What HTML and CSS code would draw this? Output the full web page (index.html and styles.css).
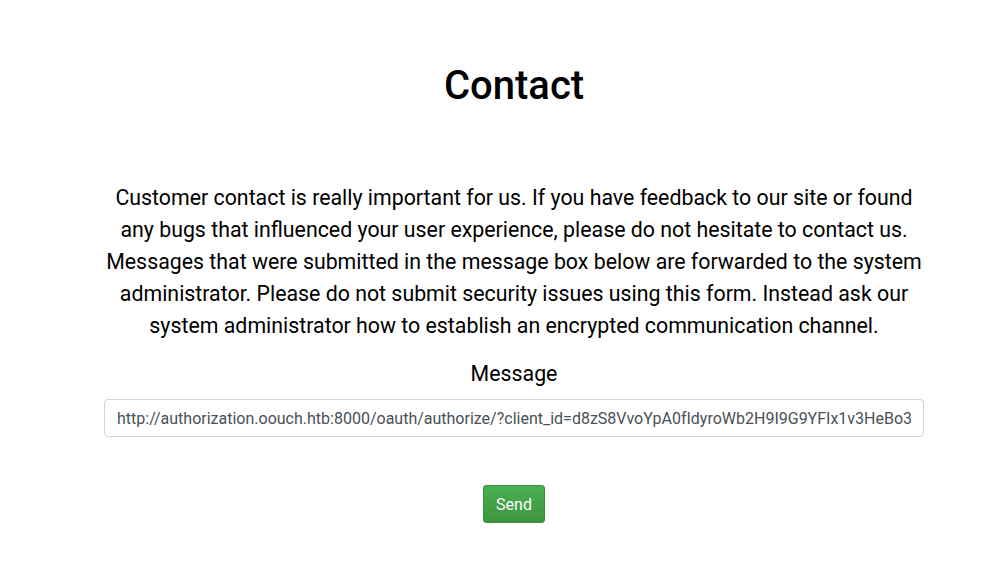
FILE: index.html
```html
<!DOCTYPE html>
<html>
<head>
<meta charset="utf-8">
<link rel="stylesheet" href="styles.css">
</head>
<body>
<main class="page">
  <h1 class="title">Contact</h1>
  <p class="intro">Customer contact is really important for us. If you have feedback to our site or found any bugs that influenced your user experience, please do not hesitate to contact us. Messages that were submitted in the message box below are forwarded to the system administrator. Please do not submit security issues using this form. Instead ask our system administrator how to establish an encrypted communication channel.</p>
  <form class="form">
    <label class="label" for="msg">Message</label>
    <input class="field" id="msg" type="text" value="http://authorization.oouch.htb:8000/oauth/authorize/?client_id=d8zS8VvoYpA0fIdyroWb2H9I9G9YFIx1v3HeBo3Gz&amp;response_type=code&amp;redirect_uri=http://consumer.oouch.htb:5000/oauth/connect/token&amp;scope=read">
    <button class="send" type="button">Send</button>
  </form>
</main>
</body>
</html>
```
FILE: styles.css
```css
html, body {
  margin: 0;
  padding: 0;
  background: #fff;
}
body {
  font-family: Roboto, "Liberation Sans", sans-serif;
  color: #000;
}
.page {
  width: 820px;
  margin-left: 104px;
  padding-top: 62px;
  display: flex;
  flex-direction: column;
  align-items: center;
}
.title {
  font-size: 40px;
  font-weight: 500;
  line-height: 48px;
  margin: 0;
}
.intro {
  font-size: 21.33px;
  line-height: 32px;
  text-align: center;
  margin: 72px 0 0;
}
.form {
  width: 100%;
  display: flex;
  flex-direction: column;
  align-items: center;
}
.label {
  font-size: 21.33px;
  line-height: 30px;
  margin-top: 17px;
}
.field {
  box-sizing: border-box;
  width: 100%;
  height: 38px;
  margin-top: 10px;
  padding: 6px 12px;
  font-family: Roboto, "Liberation Sans", sans-serif;
  font-size: 16px;
  color: #495057;
  border: 1px solid #ced4da;
  border-radius: 4px;
  background: #fff;
  outline: none;
}
.send {
  margin-top: 48px;
  height: 38px;
  width: 62px;
  padding: 0;
  font-family: Roboto, "Liberation Sans", sans-serif;
  font-size: 16px;
  color: #fff;
  background: linear-gradient(#4cae52, #3d963f);
  border: 1px solid #3a8f3c;
  border-radius: 3px;
}
```
